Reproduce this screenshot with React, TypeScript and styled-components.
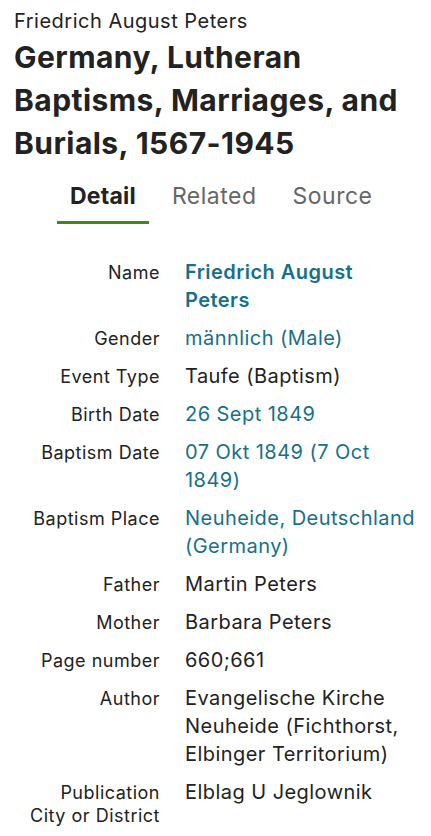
import styled, { createGlobalStyle } from 'styled-components';

const rows = [
    { label: 'Name', value: 'Friedrich August Peters', link: true, bold: true },
    { label: 'Gender', value: 'männlich (Male)', link: true },
    { label: 'Event Type', value: 'Taufe (Baptism)' },
    { label: 'Birth Date', value: '26 Sept 1849', link: true },
    { label: 'Baptism Date', value: '07 Okt 1849 (7 Oct 1849)', link: true },
    { label: 'Baptism Place', value: 'Neuheide, Deutschland (Germany)', link: true },
    { label: 'Father', value: 'Martin Peters' },
    { label: 'Mother', value: 'Barbara Peters' },
    { label: 'Page number', value: '660;661' },
    { label: 'Author', value: 'Evangelische Kirche Neuheide (Fichthorst, Elbinger Territorium)' },
    { label: 'Publication City or District', value: 'Elblag U Jeglownik' },
]

const tabs = ['Detail', 'Related', 'Source']

export default function App() {
    return (
        <>
            <GlobalStyle />
            <SPage>
                <SName>Friedrich August Peters</SName>
                <STitle>Germany, Lutheran Baptisms, Marriages, and Burials, 1567-1945</STitle>
                <STabs>
                    {tabs.map((t, i) => (
                        <STab key={t} $active={i === 0}>{t}</STab>
                    ))}
                </STabs>
                <SList>
                    {rows.map((r) => (
                        <SRow key={r.label}>
                            <SLabel>{r.label}</SLabel>
                            <SValue $link={r.link} $bold={r.bold}>{r.value}</SValue>
                        </SRow>
                    ))}
                </SList>
            </SPage>
        </>
    )
}

const GlobalStyle = createGlobalStyle`
    body {
        margin: 0;
        background: #fff;
        font-family: Inter, "Liberation Sans", sans-serif;
        color: #222;
    }
`
const SPage = styled.div`
    padding: 8px 10px 0 14px;
`
const SName = styled.div`
    font-size: 20px;
    line-height: 26px;
    color: #222;
    letter-spacing: 0.5px;
`
const STitle = styled.h1`
    margin: 2px 0 0;
    font-size: 30px;
    line-height: 43px;
    font-weight: 700;
    color: #222;
    letter-spacing: 0.45px;
`
const STabs = styled.div`
    display: flex;
    gap: 10px;
    margin: 17px 0 0 43px;
`
const STab = styled.div<{ $active?: boolean }>`
    padding: 0 13px 11px;
    font-size: 23px;
    line-height: 28px;
    font-weight: ${(p) => (p.$active ? 700 : 400)};
    color: ${(p) => (p.$active ? '#222' : '#666')};
    border-bottom: 3px solid ${(p) => (p.$active ? '#3b8a12' : 'transparent')};
    letter-spacing: ${(p) => (p.$active ? '0.2px' : '0.5px')};
`
const SList = styled.div`
    display: flex;
    flex-direction: column;
    gap: 10px;
    margin-top: 34px;
    padding-left: 12px;
`
const SRow = styled.div`
    display: grid;
    grid-template-columns: 134px 1fr;
    column-gap: 25px;
`
const SLabel = styled.div`
    text-align: right;
    font-size: 18px;
    line-height: 23px;
    padding-top: 3px;
    letter-spacing: 0.5px;
    color: #222;
`
const SValue = styled.div<{ $link?: boolean; $bold?: boolean }>`
    font-size: 20px;
    line-height: 28px;
    letter-spacing: 0.45px;
    color: ${(p) => (p.$link ? '#16708a' : '#222')};
    font-weight: ${(p) => (p.$bold ? 600 : 400)};
`
